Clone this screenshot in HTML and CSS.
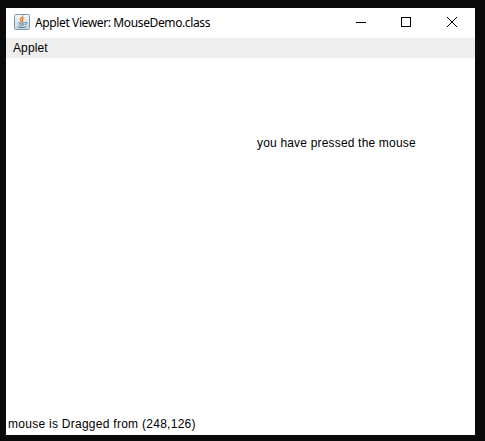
FILE: index.html
```html
<!DOCTYPE html>
<html lang="en">
<head>
<meta charset="utf-8">
<title>Applet Viewer: MouseDemo.class</title>
<link rel="stylesheet" href="styles.css">
</head>
<body>
<main class="window">
  <header class="titlebar">
    <svg class="java-icon" width="16" height="16" viewBox="0 0 16 16" fill="none">
      <defs><linearGradient id="tile" x2="0" y2="1"><stop stop-color="#f5f8fa"/><stop offset="1" stop-color="#c5d5e0"/></linearGradient></defs>
      <rect x=".5" y=".5" width="15" height="15" rx="1" fill="url(#tile)" stroke="#8298a8"/>
      <path d="M8.8 1.5C9.5 3.5 6 4 6.3 5.8C6.5 6.7 7.4 7 7.5 8M10.2 4C7.7 5 8 5.7 8.7 6.5C9 7.200 8.3 7.700 8.3 8" stroke="#e57a20" stroke-width="1.2"/>
      <path d="M4.500 8.700c1 .7 4.800.6 6.100 0M5.200 10.700c1.500.6 3.600.6 5.100 0M11 8.600c2.500-.7 2.200 1.400.2 2.200M3.800 12.600c2 1.200 6.500 1.200 8.500 0" stroke="#416c8c" stroke-width=".9"/>
    </svg>
    <h1 class="title">Applet Viewer: MouseDemo.class</h1>
    <svg class="controls" width="138" height="30" viewBox="0 0 138 30" fill="none" stroke="#000" shape-rendering="crispEdges">
      <path d="M19 14.5h10"/>
      <rect x="64.500" y="9.500" width="9" height="9"/>
      <path d="M110 9l10 10M120 9l-10 10" shape-rendering="auto"/>
    </svg>
  </header>
  <nav class="menubar"><span class="menu">Applet</span></nav>
  <section class="canvas"><p class="message">you have pressed the mouse</p></section>
  <footer class="status">mouse is Dragged from (248,126)</footer>
</main>
</body>
</html>
```
FILE: styles.css
```css
* { box-sizing: border-box; }
body {
  margin: 0;
  height: 441px;
  padding: 8px 10px 6px 6px;
  background: #0a0a0a;
  overflow: hidden;
  color: #000;
  font: 12px/16px "Liberation Sans", Arial, sans-serif;
}
.window {
  display: flex;
  flex-direction: column;
  height: 427px;
  background: #fff;
}
.titlebar {
  display: flex;
  align-items: center;
  height: 30px;
  padding-left: 8px;
}
.java-icon { margin-right: 5px; margin-top: -2px; }
.title {
  margin: 0;
  font: 12px/16px "Noto Sans", sans-serif;
  letter-spacing: -0.38px;
  white-space: nowrap;
}
.controls { margin-left: auto; }
.menubar {
  height: 20px;
  padding: 2px 7px;
  background: #eee;
}
.menu { letter-spacing: 0.1px; }
.canvas { flex: 1; padding: 77px 0 0 251px; }
.message { margin: 0; letter-spacing: 0.18px; white-space: nowrap; }
.status { height: 20px; padding: 1px 2px; letter-spacing: 0.27px; }
```
